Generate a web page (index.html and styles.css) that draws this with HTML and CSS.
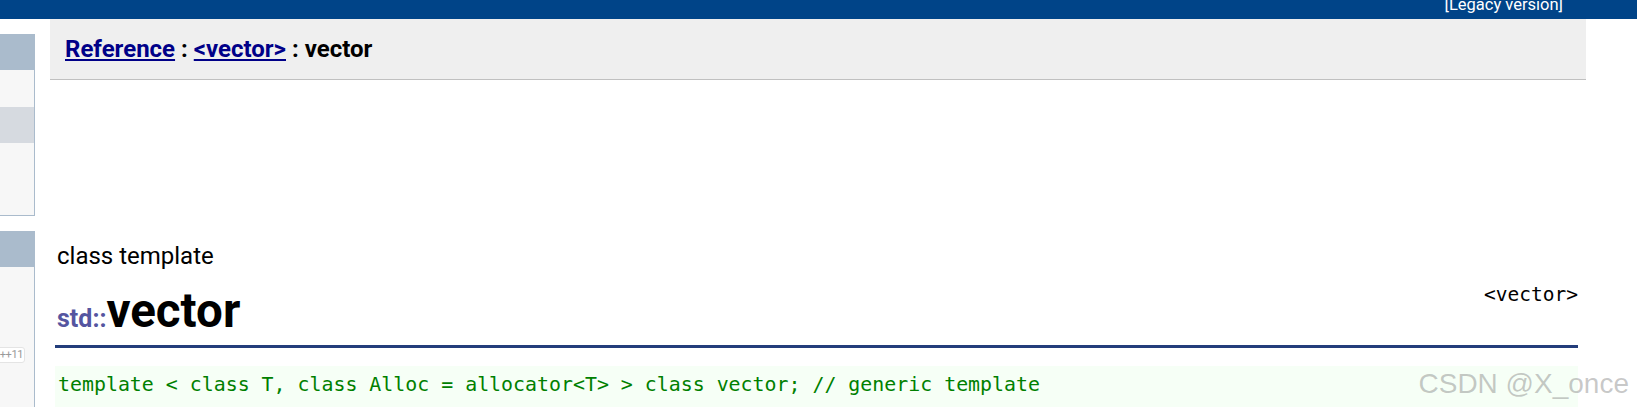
FILE: index.html
```html
<!DOCTYPE html>
<html>
<head>
<meta charset="utf-8">
<link rel="stylesheet" href="styles.css">
</head>
<body>
<div class="topbar"><span class="legacy">[Legacy version]</span></div>
<div class="layout">
  <aside class="sidebar">
    <div class="sbox sbox-first">
      <div class="sbox-head"></div>
      <div class="sbox-row"></div>
      <div class="sbox-row sbox-row-sel"></div>
      <div class="sbox-fill"></div>
    </div>
    <div class="sbox sbox-second">
      <div class="sbox-head"></div>
      <div class="sbox-body">
        <div class="badge-line"><span class="badge">C++11</span></div>
      </div>
    </div>
  </aside>
  <main class="main">
    <div class="crumbs">
      <a href="#" class="crumb-link">Reference</a> : <a href="#" class="crumb-link">&lt;vector&gt;</a> : vector
    </div>
    <div class="content">
      <div class="kind">class template</div>
      <div class="titlebar">
        <h1 class="title"><span class="ns">std::</span>vector</h1>
        <div class="header-file">&lt;vector&gt;</div>
      </div>
      <pre class="decl">template &lt; class T, class Alloc = allocator&lt;T&gt; &gt; class vector; // generic template</pre>
    </div>
  </main>
</div>
<div class="watermark">CSDN @X_once</div>
</body>
</html>
```

FILE: styles.css
```css
html, body {
  margin: 0;
  padding: 0;
}
body {
  width: 1637px;
  height: 407px;
  overflow: hidden;
  background: #ffffff;
  font-family: Roboto, "Liberation Sans", sans-serif;
  color: #000;
  position: relative;
}
.topbar {
  height: 19px;
  background: #004488;
  overflow: hidden;
  display: flex;
  justify-content: flex-end;
  padding-right: 74px;
}
.legacy {
  color: #ffffff;
  font-size: 16.5px;
  line-height: 19px;
  margin-top: -5px;
}
.layout {
  display: flex;
  align-items: flex-start;
}
.sidebar {
  width: 35px;
  flex: none;
  padding-top: 15px;
  display: flex;
  flex-direction: column;
  gap: 15px;
  overflow: hidden;
}
.sbox {
  background: #f7f7f7;
  border-right: 1px solid #aabbcc;
  border-bottom: 1px solid #aabbcc;
  box-sizing: border-box;
}
.sbox-head {
  height: 36px;
  background: #aabbcc;
}
.sbox-row {
  height: 37px;
}
.sbox-row-sel {
  height: 36px;
  background: #d6dae0;
}
.sbox-fill {
  height: 72px;
}
.sbox-second {
  border-bottom: none;
  height: 200px;
}
.sbox-body {
  padding-top: 80px;
}
.badge-line {
  display: flex;
  justify-content: flex-end;
  padding-right: 9px;
}
.badge {
  flex: none;
  font-family: Roboto, "Liberation Sans", sans-serif;
  font-size: 11px;
  letter-spacing: -0.4px;
  line-height: 14px;
  color: #999;
  background: #fff;
  border: 1px solid #e4e4e4;
  border-radius: 3px;
  padding: 0 1px;
}
.main {
  margin-left: 15px;
  width: 1536px;
  flex: none;
}
.crumbs {
  height: 61px;
  background: #efefef;
  border-bottom: 1px solid #c0c0c0;
  padding-left: 15px;
  font-weight: bold;
  font-size: 24px;
  line-height: 24px;
  padding-top: 18px;
  box-sizing: border-box;
}
.crumb-link {
  color: #000088;
  text-decoration: underline;
}
.content {
  padding: 0 8px 0 5px;
}
.kind {
  margin-top: 164px;
  font-size: 24px;
  line-height: 24px;
  padding-left: 2px;
}
.titlebar {
  display: flex;
  justify-content: space-between;
  align-items: flex-start;
  margin-top: 17px;
  border-bottom: 3px solid #233d7b;
  padding-bottom: 8px;
}
.title {
  margin: 0;
  font-size: 47.5px;
  line-height: 52px;
  font-weight: bold;
  padding-left: 2px;
}
.ns {
  font-size: 25px;
  line-height: 1;
  color: #5555a0;
}
.header-file {
  font-family: "DejaVu Sans Mono", "Liberation Mono", monospace;
  font-size: 19.5px;
  line-height: 20px;
  margin-top: 0;
}
.decl {
  margin: 18px 0 0 0;
  background: #f6fff6;
  color: #008000;
  font-family: "DejaVu Sans Mono", "Liberation Mono", monospace;
  font-size: 19.9px;
  line-height: 24px;
  padding: 7px 3px 10px;
}
.watermark {
  position: absolute;
  right: 8px;
  top: 369px;
  font-family: "Liberation Sans", Arial, sans-serif;
  font-size: 28px;
  line-height: 30px;
  color: rgba(110, 110, 110, 0.38);
}
```
